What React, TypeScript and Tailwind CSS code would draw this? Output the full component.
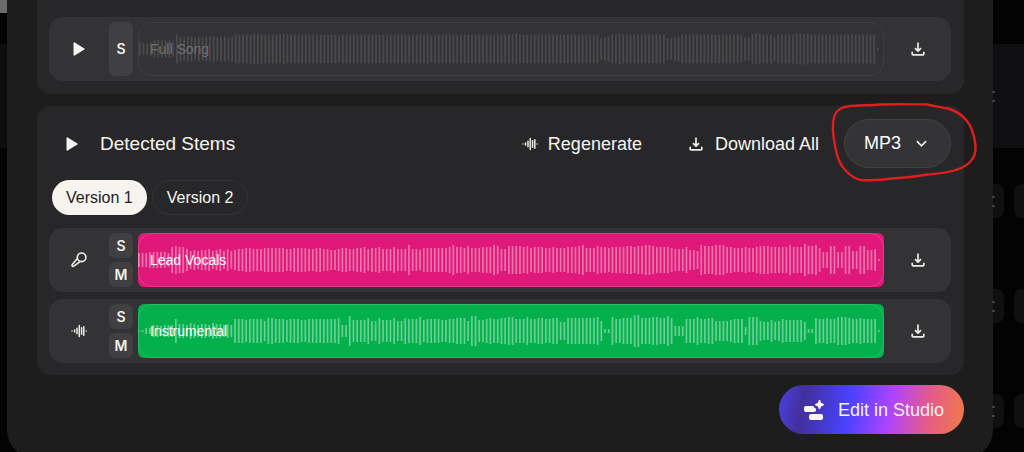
import React from 'react';

// One base-36 digit per bar, the digit is half of the bar's height.
const FULL_SONG =
  '7667999998fdcddcdcdddcddcdfffffggffffffgffffffffffffffeffffffffffffffffffffffffeffffffffffffffffffffffgffffffffffffffffffffffbcdffgffffffffffffbbcdffffffffffffffffeccfggfffcfffffggggffffffffffffffffff1';
const LEAD_VOCALS =
  '777888887deddb9a9aab9ab9b9abbccbbbccccccbbccccbbccbbaabccbbccdbccdbbbdbbbfbbacccccccdfddcecccdddfebbeeeedecdddccdcccdddefcccedd' +
  'cdddd' +
  'eedeeffeddddcbbbdaa9feeefffddcccdccdeeedddddfdddgeefc88ee88ee99eeaab1';
const INSTRUMENTAL =
  '0133665666c776876776877676cccbccccaddcccbcccbbccccccccd66fbbbbdaadbbbdaadcccebccccbbccdddaffbbcdccddeeccceccddccdd99ddddddddea22eccdd' +
  'dggdddeeddfd555cccecc' +
  'ddaaaabccc4eeea99b9acbbbbb922dccdcceeedccdcccc1';

const STEMS = [
  {
    name: 'Lead Vocals',
    icon: <MicIcon />,
    levels: LEAD_VOCALS,
    fill: 'bg-[#e01879]',
  },
  {
    name: 'Instrumental',
    icon: <WaveIcon />,
    levels: INSTRUMENTAL,
    fill: 'bg-[#04b04c]',
  },
];

function PlayIcon() {
  return (
    <svg width="12" height="14" viewBox="0 0 12 14" fill="#f7f4ef" aria-hidden="true">
      <path d="M0.5 1c0-.7.6-1 1.200-.6l9.700 6c.5.300.5.900 0 1.200l-9.700 6c-.6.400-1.200.1-1.200-.6z" />
    </svg>
  );
}

function DownloadIcon() {
  return (
    <svg
      width="14" height="14" viewBox="0 0 14 14" fill="none" stroke="#efece6"
      strokeWidth="1.700" strokeLinejoin="round" aria-hidden="true"
    >
      <path d="M7 0.5v8.500M4 6.200 7 9.200l3-3M1.200 9.700v2.300c0 .6.300.9.900.9h9.800c.6 0 .9-.3.9-.9V9.700" />
    </svg>
  );
}

function WaveIcon() {
  return (
    <svg width="16" height="14" viewBox="0 0 16 14" stroke="#efece6" strokeWidth="1.500" strokeLinecap="round" aria-hidden="true">
      <path d="M1 6.900v.2M3.600 6v2M6 4.200v5.600M8.300 1.400v11.200M10.600 3.700v6.600M12.800 2.800v8.400M15.200 6.900v.2" />
    </svg>
  );
}

function MicIcon() {
  return (
    <svg
      width="16" height="16" viewBox="0 0 16 16" fill="none" stroke="#efece6"
      strokeWidth="1.600" strokeLinejoin="round" aria-hidden="true"
    >
      <circle cx="10.600" cy="5.300" r="4.300" />
      <path d="M6.300 6.400 1.300 12.600c-.4.5-.3 1.100 0 1.500s1 .5 1.500.1l6.600-4.800" />
    </svg>
  );
}

function StudioIcon() {
  return (
    <svg width="20" height="20" viewBox="0 0 20 20" fill="#fbf7f2" aria-hidden="true">
      <path d="M2 6h7.500c.5 1.600 1.200 2.300 2.500 2.800V10c0 1.200-.8 2-2 2H2c-1.200 0-2-.8-2-2V8c0-1.200.8-2 2-2z" />
      <rect x="5" y="14" width="14" height="6" rx="2" />
      <path d="M15.500 0c.6 0 .9.500 1.100 1.400.4 1.500.6 1.700 2.100 2.100.9.200 1.300.5 1.300 1.100s-.4.900-1.300 1.100c-1.500.4-1.700.6-2.100 2.100-.2.900-.5 1.400-1.100 1.400s-.9-.5-1.100-1.400c-.4-1.500-.6-1.700-2.100-2.100-.9-.2-1.300-.5-1.300-1.100s.4-.9 1.300-1.100c1.500-.4 1.700-.6 2.100-2.100.2-.9.5-1.400 1.100-1.400z" />
    </svg>
  );
}

function Waveform({ levels }: { levels: string }) {
  return (
    <svg className="col-start-1 row-start-1 h-full w-full" viewBox="0 0 746 54" preserveAspectRatio="none" aria-hidden="true">
      {levels.split('').map((level, i) => {
        const half = parseInt(level, 36) || 0.5;
        return <rect key={i} x={i * 3.7} y={27 - half} width="1.7" height={half * 2} fill="currentColor" />;
      })}
    </svg>
  );
}

function ToggleButton({ label, title }: { label: string; title: string }) {
  return (
    <button
      type="button"
      aria-label={title}
      className="flex w-6 flex-1 items-center justify-center rounded-md bg-[#404042] font-['Inter'] text-[14px] leading-4 font-semibold text-[#f3f0eb]"
    >
      {label}
    </button>
  );
}

function TrackRow({ lead, toggles, children, name }: {
  lead: React.ReactNode;
  toggles: React.ReactNode;
  children: React.ReactNode;
  name: string;
}) {
  return (
    <div className="flex h-16 rounded-[14px] bg-[#333335] py-[5px]">
      <div className="flex w-[60px] items-center justify-center">{lead}</div>
      <div className="mr-[5px] flex flex-col gap-1">{toggles}</div>
      {children}
      <div className="flex w-[67px] items-center justify-center">
        <button type="button" aria-label={`Download ${name}`}>
          <DownloadIcon />
        </button>
      </div>
    </div>
  );
}

function Menu() {
  return <span className="-ml-px block h-[11px] w-[3px] border-y-2 border-[#4a3b3f]" />;
}

function BackdropLeft() {
  return (
    <div className="flex w-[7px] shrink-0 flex-col" aria-hidden="true">
      <div className="h-[13px] bg-[#6c6c6c]" />
      <div className="mt-[31px] h-[104px] bg-[#0e0e10]" />
    </div>
  );
}

function BackdropRight() {
  return (
    <div className="flex w-[31px] shrink-0 flex-col" aria-hidden="true">
      <div className="mt-11 flex h-[104px] items-center bg-[#0f0f11]">
        <Menu />
      </div>
      <div className="mt-9 flex flex-col gap-[71px]">
        {[0, 1, 2].map((row) => (
          <div key={row} className="flex h-[34px] justify-between">
            <div className="flex w-[11px] items-center rounded-r-lg bg-[#101012]">
              <Menu />
            </div>
            <div className="w-[10px] rounded-l-lg bg-[#101012]" />
          </div>
        ))}
      </div>
    </div>
  );
}

function FormatSelect() {
  return (
    <div className="relative">
      <select
        aria-label="Download format"
        defaultValue="MP3"
        className="h-[49px] w-[107px] appearance-none rounded-full border border-[#424240] bg-[#343436] pl-[19px] text-[18px] text-white"
      >
        <option>MP3</option>
        <option>WAV</option>
      </select>
      <svg
        className="pointer-events-none absolute top-5 right-6" width="11" height="9" viewBox="0 0 11 9"
        fill="none" stroke="#efece6" strokeWidth="1.700" aria-hidden="true"
      >
        <path d="M0.900 2.200 5.500 6.800 10.100 2.200" />
      </svg>
      {/* Hand-drawn marker loop */}
      <svg
        className="pointer-events-none absolute -top-[19px] -left-4" width="150" height="84" viewBox="828 100 150 84"
        fill="none" stroke="#e01e1e" strokeWidth="2.400" strokeLinecap="round" strokeLinejoin="round" aria-hidden="true"
      >
        <path d="M833 126C833 114 837 108 847 106.500C857 105 869 105.500 880 104.500C893 103.800 912 104.300 927 104.500C935 106 941 107.500 948 108.500C957 111 963 116 967 121C972 127 974 134 975.500 145C976 151 974 158 970 162C966 166 962 168 957 169.500C948 173 938 173.500 928 174.500C914 177 903 178 892 178.500C882 180 870 180.500 861 180C855 179 850 175 846 171C840 165 837 157 835.500 148C834 140 832.500 134 833 126Z" />
      </svg>
    </div>
  );
}

export default function App() {
  return (
    <div className="flex h-screen overflow-hidden bg-[#030303] font-['Liberation_Sans',Arial,sans-serif] text-[#f7f4ef]">
      <BackdropLeft />
      <main className="h-max min-w-0 flex-1 rounded-b-[28px] bg-[#1d1d1e] pr-[29px] pb-6 pl-[30px]">
        <section className="rounded-b-[14px] bg-[#272729] pt-[17px] pr-[13px] pb-[13px] pl-3">
          <TrackRow
            name="Full Song"
            lead={<button type="button" aria-label="Play full song"><PlayIcon /></button>}
            toggles={<ToggleButton label="S" title="Solo full song" />}
          >
            <div className="grid min-w-0 flex-1 items-center overflow-hidden rounded-[14px] border border-[#3e3e40] text-[#4b4b4d]">
              <Waveform levels={FULL_SONG} />
              <span className="z-10 col-start-1 row-start-1 pl-[11px] text-[14px] leading-5 text-[#707072]">Full Song</span>
            </div>
          </TrackRow>
        </section>

        <section className="mt-3 rounded-[14px] bg-[#272729] pt-[13px] pr-[13px] pb-3 pl-3">
          <header className="flex items-center">
            <button type="button" aria-label="Play detected stems" className="ml-[17px]">
              <PlayIcon />
            </button>
            <h2 className="ml-[22px] text-[19px] leading-6">Detected Stems</h2>
            <button type="button" className="ml-auto flex items-center gap-[10px] text-[18px] leading-6">
              <WaveIcon />
              Regenerate
            </button>
            <button type="button" className="mr-[25px] ml-[47px] flex items-center gap-3 text-[18px] leading-6">
              <DownloadIcon />
              Download All
            </button>
            <FormatSelect />
          </header>

          <div className="mt-3 ml-[3px] flex gap-[5px] text-[16px] leading-5">
            <button type="button" className="h-[35px] rounded-full bg-[#f7f4ef] px-[14px] text-[#1d1d1e]">Version 1</button>
            <button type="button" className="h-[35px] rounded-full border border-[#333335] px-[14px]">Version 2</button>
          </div>

          <div className="mt-[13px] flex flex-col gap-[7px]">
            {STEMS.map((stem) => (
              <TrackRow
                key={stem.name}
                name={stem.name}
                lead={stem.icon}
                toggles={
                  <>
                    <ToggleButton label="S" title={`Solo ${stem.name}`} />
                    <ToggleButton label="M" title={`Mute ${stem.name}`} />
                  </>
                }
              >
                <div className={`grid min-w-0 flex-1 items-center overflow-hidden rounded-md ${stem.fill}`}>
                  <div className="col-start-1 row-start-1 h-full rounded-[14px] border border-white/15" />
                  <div className="col-start-1 row-start-1 h-full text-white/40">
                    <Waveform levels={stem.levels} />
                  </div>
                  <span className="z-10 col-start-1 row-start-1 pl-3 text-[14px] leading-5 text-white">{stem.name}</span>
                </div>
              </TrackRow>
            ))}
          </div>
        </section>

        <div className="mt-[10px] flex justify-end">
          <button
            type="button"
            className="flex h-[49px] items-center gap-[14px] rounded-full bg-[linear-gradient(100deg,#4d3fe0_0%,#42309c_14%,#4a42ff_38%,#b044ff_60%,#e45c86_80%,#f27a45_100%)] pr-5 pl-[25px] text-[18px] leading-6"
          >
            <StudioIcon />
            Edit in Studio
          </button>
        </div>
      </main>
      <BackdropRight />
    </div>
  );
}
